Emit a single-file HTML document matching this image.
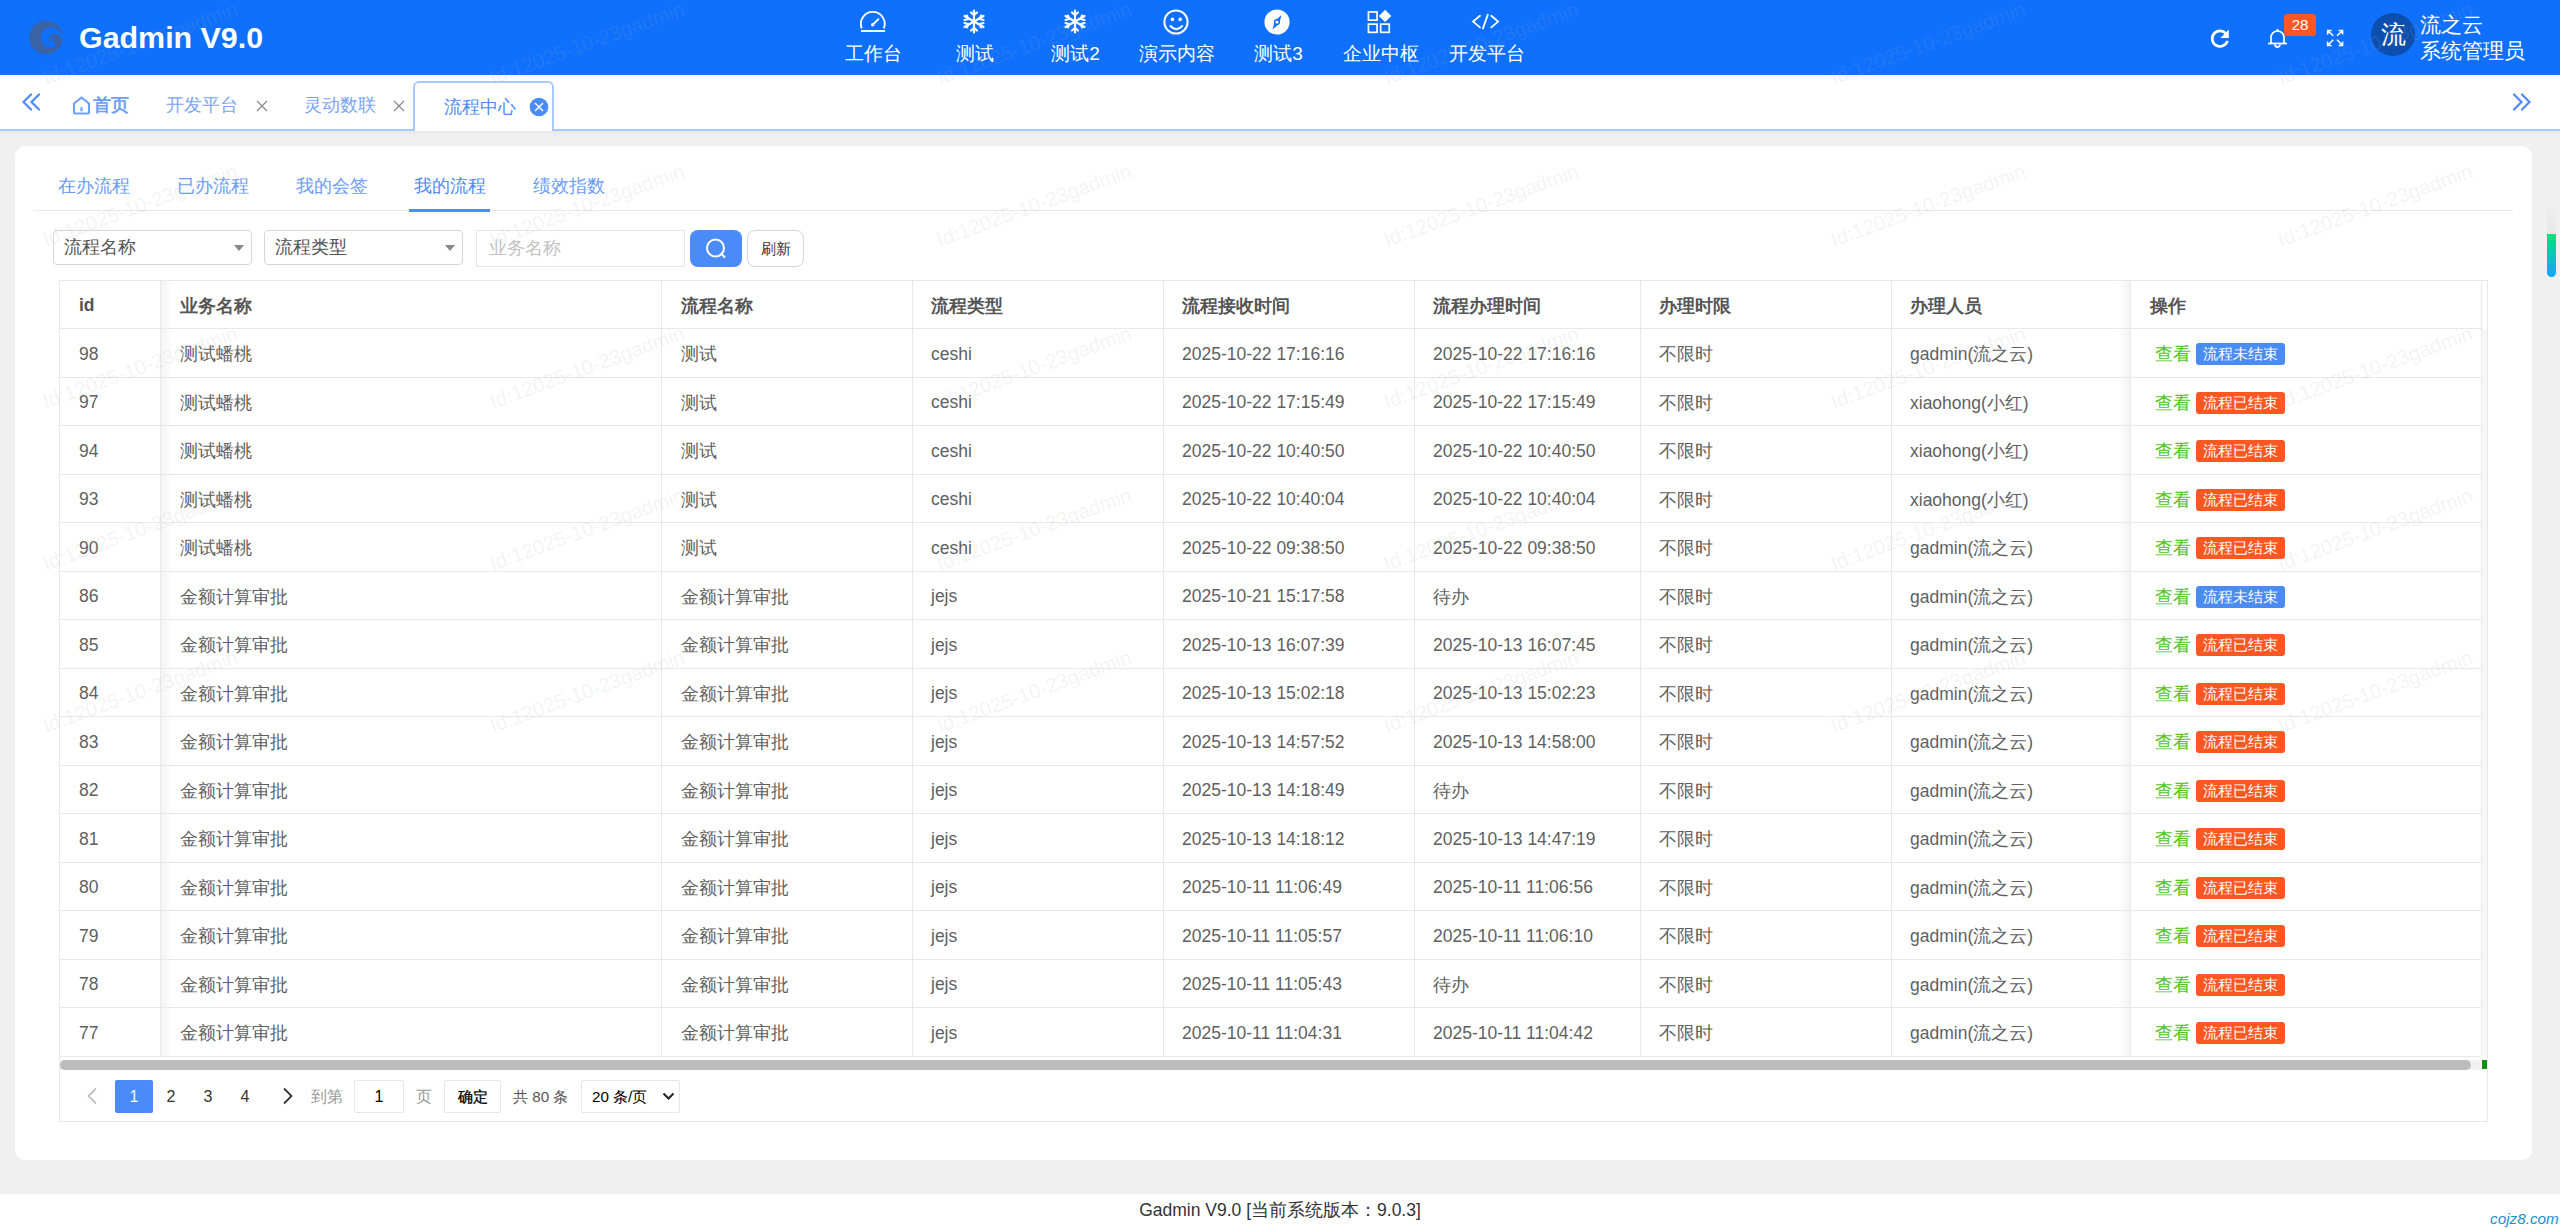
<!DOCTYPE html>
<html><head><meta charset="utf-8">
<style>
*{box-sizing:border-box;margin:0;padding:0}
html,body{width:2560px;height:1229px;overflow:hidden;background:#f0f0f0;font-family:"Liberation Sans",sans-serif;color:#5f5f5f}
.abs{position:absolute}
#hdr{position:absolute;left:0;top:0;width:2560px;height:75px;background:#0e70fd}
#logo{position:absolute}
#title{position:absolute;left:79px;top:17px;font-size:30.4px;font-weight:bold;color:#fff;line-height:40px;letter-spacing:0}
.nav{position:absolute;top:0;height:75px;color:#fff;text-align:center;font-size:19px}
.nav svg{position:absolute;top:9px;left:50%;transform:translateX(-50%)}
.nav svg.sf{margin-left:-1px}
.nav span{position:absolute;top:42.5px;left:0;right:0;line-height:22px;white-space:nowrap}
#tabbar{position:absolute;left:0;top:75px;width:2560px;height:54px;background:#fff}
#tabline{position:absolute;left:0;top:129px;width:2560px;height:2px;background:#a9c8fb;box-shadow:0 2px 3px rgba(0,0,0,0.06)}
.tab{position:absolute;top:93px;font-size:17.5px;line-height:24px;color:#5b8ff9;white-space:nowrap}
.tx{position:absolute;font-size:18px;color:#777;line-height:20px}
#acttab{position:absolute;left:413px;top:81px;width:141px;height:50px;border:2px solid #a9c8fb;border-bottom:none;border-radius:6px 6px 0 0;background:#fff}
#card{position:absolute;left:15px;top:146px;width:2517px;height:1014px;background:#fff;border-radius:10px}
.stab{position:absolute;top:173.5px;font-size:17.5px;line-height:24px;color:#6a9cf8;white-space:nowrap}
.sel{position:absolute;top:230px;height:35px;border:1px solid #d6d6d6;border-radius:4px;background:#fff;font-size:17.5px;color:#555;line-height:33px;padding-left:10px}
.sel i{position:absolute;top:14px;width:0;height:0;border-left:5px solid transparent;border-right:5px solid transparent;border-top:6px solid #888}
.hl{position:absolute;height:1px;background:#e8e8e8}
.vl{position:absolute;width:1px;background:#e8e8e8}
.th{position:absolute;display:flex;align-items:center;padding-top:3px;font-size:17.5px;font-weight:bold;color:#555;white-space:nowrap}
.td{position:absolute;display:flex;align-items:center;padding-top:3px;font-size:17.5px;color:#5f5f5f;white-space:nowrap}
.vw{color:#52c41a;margin-right:5px}
.bd{display:inline-block;height:22px;line-height:22px;padding:0 7px;font-size:15px;color:#fff;border-radius:3px}
.bl{background:#4b8bf4}
.rd{background:#ff5722}
.wm{position:absolute;font-size:20.4px;color:rgba(170,170,170,0.145);white-space:nowrap;transform-origin:0 17px;transform:rotate(-20deg);line-height:20px;pointer-events:none}
.pg{position:absolute;top:1080px;height:33px;line-height:33px;font-size:16px;color:#333;text-align:center}
#foot{position:absolute;left:0;top:1194px;width:2560px;height:35px;background:#fff;text-align:center;font-size:17.5px;color:#333;line-height:32px}
</style></head><body>

<div id="hdr">
  <svg id="logo" viewBox="0 0 46 44" style="left:24px;top:16px;width:46px;height:44px"><defs><clipPath id="hc"><circle cx="27.2" cy="21.5" r="10.3"/></clipPath></defs><circle cx="22" cy="21.4" r="16.7" fill="#3a63a6"/><circle cx="27.2" cy="21.5" r="10.3" fill="#0e70fd"/><path d="M31 20.5 L42 17 L42 24 Z" fill="#0e70fd"/><circle cx="31" cy="24.7" r="6.7" fill="#3a63a6"/><g clip-path="url(#hc)" fill="#0e70fd"><circle cx="26.4" cy="29.9" r="5.4"/></g><circle cx="28.6" cy="22.4" r="1.6" fill="#0e70fd"/></svg>
  <div id="title">Gadmin V9.0</div>

  <div class="nav" style="left:823px;width:101px">
    <svg width="28" height="25" viewBox="0 0 28 25" style="top:9px"><path d="M1.83 19.4 A11.9 11.9 0 1 1 23.77 19.4" fill="none" stroke="#fff" stroke-width="1.9"/><line x1="1" y1="22" x2="25" y2="22" stroke="#fff" stroke-width="1.9"/><path d="M12.8 15.6 L18.3 10.2" stroke="#fff" stroke-width="1.9" stroke-linecap="round"/><circle cx="12.7" cy="15.7" r="1.7" fill="#fff"/></svg>
    <span>工作台</span></div>
  <div class="nav" style="left:924px;width:101px">
    <svg class="sf" width="24" height="25" viewBox="0 0 24 25"><g stroke="#fff" stroke-width="2.2" stroke-linecap="round" fill="none"><path d="M12 1.5V23.5M2.5 7L21.5 18M2.5 18L21.5 7"/><path d="M9 3.5L12 6L15 3.5M9 21.5L12 19L15 21.5M2.5 11L6 10L5 6.5M21.5 11L18 10L19 6.5M2.5 14L6 15L5 18.5M21.5 14L18 15L19 18.5"/></g></svg>
    <span>测试</span></div>
  <div class="nav" style="left:1025px;width:101px">
    <svg class="sf" width="24" height="25" viewBox="0 0 24 25"><g stroke="#fff" stroke-width="2.2" stroke-linecap="round" fill="none"><path d="M12 1.5V23.5M2.5 7L21.5 18M2.5 18L21.5 7"/><path d="M9 3.5L12 6L15 3.5M9 21.5L12 19L15 21.5M2.5 11L6 10L5 6.5M21.5 11L18 10L19 6.5M2.5 14L6 15L5 18.5M21.5 14L18 15L19 18.5"/></g></svg>
    <span>测试2</span></div>
  <div class="nav" style="left:1126px;width:102px">
    <svg width="28" height="28" viewBox="0 0 28 28" style="top:7.6px;margin-left:-0.7px"><circle cx="14" cy="14" r="11.6" fill="none" stroke="#fff" stroke-width="2"/><circle cx="10.4" cy="11.4" r="1.8" fill="#fff"/><circle cx="18.2" cy="11.4" r="1.8" fill="#fff"/><path d="M8.5 18 Q14.3 24.6 20.1 18" fill="none" stroke="#fff" stroke-width="2" stroke-linecap="round"/></svg>
    <span>演示内容</span></div>
  <div class="nav" style="left:1228px;width:101px">
    <svg width="28" height="28" viewBox="0 0 28 28" style="top:7.6px;margin-left:-1.3px"><circle cx="14" cy="14" r="12.6" fill="#fff"/><path d="M18.5 6.9 L16.2 15.4 L9.6 21.4 L11.9 12.8 Z" fill="#0e70fd"/><circle cx="14" cy="14.1" r="3.1" fill="#0e70fd"/><circle cx="14" cy="14.1" r="1.6" fill="#fff"/></svg>
    <span>测试3</span></div>
  <div class="nav" style="left:1330px;width:101px">
    <svg width="26" height="26" viewBox="0 0 26 26" style="overflow:visible"><g fill="none" stroke="#fff" stroke-width="1.7"><rect x="0.45" y="2.95" width="8.6" height="8.2"/><rect x="0.45" y="15.15" width="8.6" height="8.2"/><rect x="12.65" y="15.15" width="8.6" height="8.2"/></g><path d="M17.1 0.7 L23.3 6.9 L17.1 13.1 L10.9 6.9 Z" fill="#fff"/></svg>
    <span>企业中枢</span></div>
  <div class="nav" style="left:1436px;width:101px">
    <svg width="26" height="18" viewBox="0 0 26 18" style="top:13px;overflow:visible"><g fill="none" stroke="#fff" stroke-width="1.8" stroke-linecap="round" stroke-linejoin="miter"><path d="M6 2.8L-0.9 8.6L6 14.4M17.3 2.8L24.1 8.6L17.3 14.4M13.8 1.6L8.9 15.5"/></g></svg>
    <span>开发平台</span></div>

  <svg class="abs" style="left:2205px;top:24px" width="30" height="30" viewBox="0 0 30 30"><path d="M22.44 16.95 A7.8 7.8 0 1 1 20.8 9.4" fill="none" stroke="#fff" stroke-width="2.7"/><path d="M23.8 5.5 L23.8 13.9 L15.4 13.9 Z" fill="#fff"/></svg>
  <svg class="abs" style="left:2267px;top:28px" width="21" height="21" viewBox="0 0 21 21"><path d="M4 15.5 V9.5 A6.5 6.5 0 0 1 17 9.5 V15.5" fill="none" stroke="#fff" stroke-width="1.7"/><line x1="1" y1="15.5" x2="20" y2="15.5" stroke="#fff" stroke-width="1.8"/><path d="M8 16.5 A2.5 2.5 0 0 0 13 16.5" fill="none" stroke="#fff" stroke-width="1.8"/><circle cx="10.5" cy="2.2" r="1.2" fill="#fff"/></svg>
  <div class="abs" style="left:2284px;top:14px;width:32px;height:22px;background:#ff5722;border-radius:3px;color:#fff;font-size:15px;line-height:22px;text-align:center">28</div>
  <svg class="abs" style="left:2326px;top:29px" width="18" height="18" viewBox="0 0 18 18"><g fill="none" stroke="#fff" stroke-width="1.5"><path d="M1.6 5.6V1.6H5.6M1.6 1.6L7.3 6.8M16.6 5.6V1.6H12.6M16.6 1.6L11 6.8M1.6 12.4V16.4H5.6M1.6 16.4L7.3 10.8M16.6 12.4V16.4H12.6M16.6 16.4L11 10.8"/></g></svg>
  <div class="abs" style="left:2371px;top:13px;width:44px;height:43px;border-radius:50%;background:#0d4faf;color:#fff;font-size:25px;line-height:43px;text-align:center">流</div>
  <div class="abs" style="left:2420px;top:12px;color:#fff;font-size:21px;line-height:26px;white-space:nowrap">流之云<br>系统管理员</div>
</div>

<div id="tabbar"></div>
<div id="tabline"></div>
<svg class="abs" style="left:22px;top:93px" width="19" height="19" viewBox="0 0 19 19"><path d="M9 1.5L1.5 9L9 16.5M17 1.5L9.5 9L17 16.5" fill="none" stroke="#4d8bf7" stroke-width="2.2" stroke-linecap="round"/></svg>
<svg class="abs" style="left:72px;top:96px" width="19" height="19" viewBox="0 0 19 19"><path d="M2 7.5L9.5 1.5L17 7.5V16.5A1 1 0 0 1 16 17.5H3A1 1 0 0 1 2 16.5Z" fill="none" stroke="#6e9ff9" stroke-width="2.2" stroke-linejoin="round"/><line x1="9.5" y1="12" x2="9.5" y2="14.5" stroke="#6e9ff9" stroke-width="2.2" stroke-linecap="round"/></svg>
<div class="tab" style="left:93px;font-weight:bold;color:#6e9ff9">首页</div>
<div class="tab" style="left:166px;color:#7aa5f8">开发平台</div>
<svg class="abs" style="left:256px;top:100px" width="12" height="12" viewBox="0 0 12 12"><path d="M1 1L11 11M11 1L1 11" stroke="#888" stroke-width="1.2"/></svg>
<div class="tab" style="left:304px;color:#7aa5f8">灵动数联</div>
<svg class="abs" style="left:393px;top:100px" width="12" height="12" viewBox="0 0 12 12"><path d="M1 1L11 11M11 1L1 11" stroke="#888" stroke-width="1.2"/></svg>
<div id="acttab"></div>
<div class="tab" style="left:444px;top:95px;color:#4d8bf7">流程中心</div>
<svg class="abs" style="left:529px;top:97px" width="20" height="20" viewBox="0 0 20 20"><circle cx="10" cy="10" r="9.3" fill="#4b8bf7"/><path d="M6 6L14 14M14 6L6 14" stroke="#fff" stroke-width="1.5"/></svg>
<svg class="abs" style="left:2512px;top:93px" width="19" height="19" viewBox="0 0 19 19"><path d="M2 1.5L9.5 9L2 16.5M10 1.5L17.5 9L10 16.5" fill="none" stroke="#4d8bf7" stroke-width="2.2" stroke-linecap="round"/></svg>

<div id="card"></div>
<div class="stab" style="left:58px">在办流程</div>
<div class="stab" style="left:177px">已办流程</div>
<div class="stab" style="left:296px">我的会签</div>
<div class="stab" style="left:414px;color:#4d8bf7">我的流程</div>
<div class="stab" style="left:533px">绩效指数</div>
<div class="hl" style="left:34px;top:210px;width:2479px"></div>
<div class="abs" style="left:409px;top:209px;width:81px;height:3px;background:#4d8bf7"></div>

<div class="sel" style="left:53px;width:199px">流程名称<i style="left:180px"></i></div>
<div class="sel" style="left:264px;width:199px">流程类型<i style="left:180px"></i></div>
<div class="abs" style="left:476px;top:230px;width:209px;height:37px;border:1px solid #e6e6e6;font-size:17.5px;color:#c2c2c2;line-height:35px;padding-left:12px">业务名称</div>
<div class="abs" style="left:690px;top:230px;width:52px;height:37px;background:#4b8bf7;border-radius:8px"></div>
<svg class="abs" style="left:704px;top:237px" width="26" height="24" viewBox="0 0 26 24"><circle cx="11.5" cy="11" r="8.5" fill="none" stroke="#fff" stroke-width="2"/><path d="M17.5 17L20.5 20" stroke="#fff" stroke-width="2" stroke-linecap="round"/></svg>
<div class="abs" style="left:747px;top:230px;width:57px;height:37px;border:1px solid #d6d6d6;border-radius:8px;font-size:15px;color:#333;line-height:35px;text-align:center">刷新</div>

<!-- fixed col shadows -->
<div class="abs" style="left:161px;top:281px;width:12px;height:776px;background:linear-gradient(to right,rgba(0,0,0,0.045),rgba(0,0,0,0))"></div>
<div class="abs" style="left:2118px;top:281px;width:12px;height:776px;background:linear-gradient(to left,rgba(0,0,0,0.045),rgba(0,0,0,0))"></div>
<div class="abs" style="left:2482px;top:329px;width:5px;height:727px;background:#f7f7f7"></div>

<div class="hl" style="top:280px;left:59px;width:2429px"></div>
<div class="hl" style="top:328px;left:59px;width:2422px"></div>
<div class="hl" style="top:377px;left:59px;width:2422px"></div>
<div class="hl" style="top:425px;left:59px;width:2422px"></div>
<div class="hl" style="top:474px;left:59px;width:2422px"></div>
<div class="hl" style="top:522px;left:59px;width:2422px"></div>
<div class="hl" style="top:571px;left:59px;width:2422px"></div>
<div class="hl" style="top:619px;left:59px;width:2422px"></div>
<div class="hl" style="top:668px;left:59px;width:2422px"></div>
<div class="hl" style="top:716px;left:59px;width:2422px"></div>
<div class="hl" style="top:765px;left:59px;width:2422px"></div>
<div class="hl" style="top:813px;left:59px;width:2422px"></div>
<div class="hl" style="top:862px;left:59px;width:2422px"></div>
<div class="hl" style="top:910px;left:59px;width:2422px"></div>
<div class="hl" style="top:959px;left:59px;width:2422px"></div>
<div class="hl" style="top:1007px;left:59px;width:2422px"></div>
<div class="hl" style="top:1056px;left:59px;width:2422px"></div>
<div class="vl" style="left:59px;top:280px;height:777px"></div>
<div class="vl" style="left:160px;top:280px;height:777px"></div>
<div class="vl" style="left:661px;top:280px;height:777px"></div>
<div class="vl" style="left:912px;top:280px;height:777px"></div>
<div class="vl" style="left:1163px;top:280px;height:777px"></div>
<div class="vl" style="left:1414px;top:280px;height:777px"></div>
<div class="vl" style="left:1640px;top:280px;height:777px"></div>
<div class="vl" style="left:1891px;top:280px;height:777px"></div>
<div class="vl" style="left:2130px;top:280px;height:777px"></div>
<div class="vl" style="left:2481px;top:280px;height:777px"></div>
<div class="vl" style="left:2487px;top:280px;height:842px"></div>
<div class="th" style="left:79px;top:280px;height:48px">id</div>
<div class="th" style="left:180px;top:280px;height:48px">业务名称</div>
<div class="th" style="left:681px;top:280px;height:48px">流程名称</div>
<div class="th" style="left:931px;top:280px;height:48px">流程类型</div>
<div class="th" style="left:1182px;top:280px;height:48px">流程接收时间</div>
<div class="th" style="left:1433px;top:280px;height:48px">流程办理时间</div>
<div class="th" style="left:1659px;top:280px;height:48px">办理时限</div>
<div class="th" style="left:1910px;top:280px;height:48px">办理人员</div>
<div class="th" style="left:2150px;top:280px;height:48px">操作</div>
<div class="td" style="left:79px;top:328px;height:49px">98</div>
<div class="td" style="left:180px;top:328px;height:49px">测试蟠桃</div>
<div class="td" style="left:681px;top:328px;height:49px">测试</div>
<div class="td" style="left:931px;top:328px;height:49px">ceshi</div>
<div class="td" style="left:1182px;top:328px;height:49px">2025-10-22 17:16:16</div>
<div class="td" style="left:1433px;top:328px;height:49px">2025-10-22 17:16:16</div>
<div class="td" style="left:1659px;top:328px;height:49px">不限时</div>
<div class="td" style="left:1910px;top:328px;height:49px">gadmin(流之云)</div>
<div class="td op" style="left:2155px;top:328px;height:49px"><span class="vw">查看</span><span class="bd bl">流程未结束</span></div>
<div class="td" style="left:79px;top:377px;height:48px">97</div>
<div class="td" style="left:180px;top:377px;height:48px">测试蟠桃</div>
<div class="td" style="left:681px;top:377px;height:48px">测试</div>
<div class="td" style="left:931px;top:377px;height:48px">ceshi</div>
<div class="td" style="left:1182px;top:377px;height:48px">2025-10-22 17:15:49</div>
<div class="td" style="left:1433px;top:377px;height:48px">2025-10-22 17:15:49</div>
<div class="td" style="left:1659px;top:377px;height:48px">不限时</div>
<div class="td" style="left:1910px;top:377px;height:48px">xiaohong(小红)</div>
<div class="td op" style="left:2155px;top:377px;height:48px"><span class="vw">查看</span><span class="bd rd">流程已结束</span></div>
<div class="td" style="left:79px;top:425px;height:49px">94</div>
<div class="td" style="left:180px;top:425px;height:49px">测试蟠桃</div>
<div class="td" style="left:681px;top:425px;height:49px">测试</div>
<div class="td" style="left:931px;top:425px;height:49px">ceshi</div>
<div class="td" style="left:1182px;top:425px;height:49px">2025-10-22 10:40:50</div>
<div class="td" style="left:1433px;top:425px;height:49px">2025-10-22 10:40:50</div>
<div class="td" style="left:1659px;top:425px;height:49px">不限时</div>
<div class="td" style="left:1910px;top:425px;height:49px">xiaohong(小红)</div>
<div class="td op" style="left:2155px;top:425px;height:49px"><span class="vw">查看</span><span class="bd rd">流程已结束</span></div>
<div class="td" style="left:79px;top:474px;height:48px">93</div>
<div class="td" style="left:180px;top:474px;height:48px">测试蟠桃</div>
<div class="td" style="left:681px;top:474px;height:48px">测试</div>
<div class="td" style="left:931px;top:474px;height:48px">ceshi</div>
<div class="td" style="left:1182px;top:474px;height:48px">2025-10-22 10:40:04</div>
<div class="td" style="left:1433px;top:474px;height:48px">2025-10-22 10:40:04</div>
<div class="td" style="left:1659px;top:474px;height:48px">不限时</div>
<div class="td" style="left:1910px;top:474px;height:48px">xiaohong(小红)</div>
<div class="td op" style="left:2155px;top:474px;height:48px"><span class="vw">查看</span><span class="bd rd">流程已结束</span></div>
<div class="td" style="left:79px;top:522px;height:49px">90</div>
<div class="td" style="left:180px;top:522px;height:49px">测试蟠桃</div>
<div class="td" style="left:681px;top:522px;height:49px">测试</div>
<div class="td" style="left:931px;top:522px;height:49px">ceshi</div>
<div class="td" style="left:1182px;top:522px;height:49px">2025-10-22 09:38:50</div>
<div class="td" style="left:1433px;top:522px;height:49px">2025-10-22 09:38:50</div>
<div class="td" style="left:1659px;top:522px;height:49px">不限时</div>
<div class="td" style="left:1910px;top:522px;height:49px">gadmin(流之云)</div>
<div class="td op" style="left:2155px;top:522px;height:49px"><span class="vw">查看</span><span class="bd rd">流程已结束</span></div>
<div class="td" style="left:79px;top:571px;height:48px">86</div>
<div class="td" style="left:180px;top:571px;height:48px">金额计算审批</div>
<div class="td" style="left:681px;top:571px;height:48px">金额计算审批</div>
<div class="td" style="left:931px;top:571px;height:48px">jejs</div>
<div class="td" style="left:1182px;top:571px;height:48px">2025-10-21 15:17:58</div>
<div class="td" style="left:1433px;top:571px;height:48px">待办</div>
<div class="td" style="left:1659px;top:571px;height:48px">不限时</div>
<div class="td" style="left:1910px;top:571px;height:48px">gadmin(流之云)</div>
<div class="td op" style="left:2155px;top:571px;height:48px"><span class="vw">查看</span><span class="bd bl">流程未结束</span></div>
<div class="td" style="left:79px;top:619px;height:49px">85</div>
<div class="td" style="left:180px;top:619px;height:49px">金额计算审批</div>
<div class="td" style="left:681px;top:619px;height:49px">金额计算审批</div>
<div class="td" style="left:931px;top:619px;height:49px">jejs</div>
<div class="td" style="left:1182px;top:619px;height:49px">2025-10-13 16:07:39</div>
<div class="td" style="left:1433px;top:619px;height:49px">2025-10-13 16:07:45</div>
<div class="td" style="left:1659px;top:619px;height:49px">不限时</div>
<div class="td" style="left:1910px;top:619px;height:49px">gadmin(流之云)</div>
<div class="td op" style="left:2155px;top:619px;height:49px"><span class="vw">查看</span><span class="bd rd">流程已结束</span></div>
<div class="td" style="left:79px;top:668px;height:48px">84</div>
<div class="td" style="left:180px;top:668px;height:48px">金额计算审批</div>
<div class="td" style="left:681px;top:668px;height:48px">金额计算审批</div>
<div class="td" style="left:931px;top:668px;height:48px">jejs</div>
<div class="td" style="left:1182px;top:668px;height:48px">2025-10-13 15:02:18</div>
<div class="td" style="left:1433px;top:668px;height:48px">2025-10-13 15:02:23</div>
<div class="td" style="left:1659px;top:668px;height:48px">不限时</div>
<div class="td" style="left:1910px;top:668px;height:48px">gadmin(流之云)</div>
<div class="td op" style="left:2155px;top:668px;height:48px"><span class="vw">查看</span><span class="bd rd">流程已结束</span></div>
<div class="td" style="left:79px;top:716px;height:49px">83</div>
<div class="td" style="left:180px;top:716px;height:49px">金额计算审批</div>
<div class="td" style="left:681px;top:716px;height:49px">金额计算审批</div>
<div class="td" style="left:931px;top:716px;height:49px">jejs</div>
<div class="td" style="left:1182px;top:716px;height:49px">2025-10-13 14:57:52</div>
<div class="td" style="left:1433px;top:716px;height:49px">2025-10-13 14:58:00</div>
<div class="td" style="left:1659px;top:716px;height:49px">不限时</div>
<div class="td" style="left:1910px;top:716px;height:49px">gadmin(流之云)</div>
<div class="td op" style="left:2155px;top:716px;height:49px"><span class="vw">查看</span><span class="bd rd">流程已结束</span></div>
<div class="td" style="left:79px;top:765px;height:48px">82</div>
<div class="td" style="left:180px;top:765px;height:48px">金额计算审批</div>
<div class="td" style="left:681px;top:765px;height:48px">金额计算审批</div>
<div class="td" style="left:931px;top:765px;height:48px">jejs</div>
<div class="td" style="left:1182px;top:765px;height:48px">2025-10-13 14:18:49</div>
<div class="td" style="left:1433px;top:765px;height:48px">待办</div>
<div class="td" style="left:1659px;top:765px;height:48px">不限时</div>
<div class="td" style="left:1910px;top:765px;height:48px">gadmin(流之云)</div>
<div class="td op" style="left:2155px;top:765px;height:48px"><span class="vw">查看</span><span class="bd rd">流程已结束</span></div>
<div class="td" style="left:79px;top:813px;height:49px">81</div>
<div class="td" style="left:180px;top:813px;height:49px">金额计算审批</div>
<div class="td" style="left:681px;top:813px;height:49px">金额计算审批</div>
<div class="td" style="left:931px;top:813px;height:49px">jejs</div>
<div class="td" style="left:1182px;top:813px;height:49px">2025-10-13 14:18:12</div>
<div class="td" style="left:1433px;top:813px;height:49px">2025-10-13 14:47:19</div>
<div class="td" style="left:1659px;top:813px;height:49px">不限时</div>
<div class="td" style="left:1910px;top:813px;height:49px">gadmin(流之云)</div>
<div class="td op" style="left:2155px;top:813px;height:49px"><span class="vw">查看</span><span class="bd rd">流程已结束</span></div>
<div class="td" style="left:79px;top:862px;height:48px">80</div>
<div class="td" style="left:180px;top:862px;height:48px">金额计算审批</div>
<div class="td" style="left:681px;top:862px;height:48px">金额计算审批</div>
<div class="td" style="left:931px;top:862px;height:48px">jejs</div>
<div class="td" style="left:1182px;top:862px;height:48px">2025-10-11 11:06:49</div>
<div class="td" style="left:1433px;top:862px;height:48px">2025-10-11 11:06:56</div>
<div class="td" style="left:1659px;top:862px;height:48px">不限时</div>
<div class="td" style="left:1910px;top:862px;height:48px">gadmin(流之云)</div>
<div class="td op" style="left:2155px;top:862px;height:48px"><span class="vw">查看</span><span class="bd rd">流程已结束</span></div>
<div class="td" style="left:79px;top:910px;height:49px">79</div>
<div class="td" style="left:180px;top:910px;height:49px">金额计算审批</div>
<div class="td" style="left:681px;top:910px;height:49px">金额计算审批</div>
<div class="td" style="left:931px;top:910px;height:49px">jejs</div>
<div class="td" style="left:1182px;top:910px;height:49px">2025-10-11 11:05:57</div>
<div class="td" style="left:1433px;top:910px;height:49px">2025-10-11 11:06:10</div>
<div class="td" style="left:1659px;top:910px;height:49px">不限时</div>
<div class="td" style="left:1910px;top:910px;height:49px">gadmin(流之云)</div>
<div class="td op" style="left:2155px;top:910px;height:49px"><span class="vw">查看</span><span class="bd rd">流程已结束</span></div>
<div class="td" style="left:79px;top:959px;height:48px">78</div>
<div class="td" style="left:180px;top:959px;height:48px">金额计算审批</div>
<div class="td" style="left:681px;top:959px;height:48px">金额计算审批</div>
<div class="td" style="left:931px;top:959px;height:48px">jejs</div>
<div class="td" style="left:1182px;top:959px;height:48px">2025-10-11 11:05:43</div>
<div class="td" style="left:1433px;top:959px;height:48px">待办</div>
<div class="td" style="left:1659px;top:959px;height:48px">不限时</div>
<div class="td" style="left:1910px;top:959px;height:48px">gadmin(流之云)</div>
<div class="td op" style="left:2155px;top:959px;height:48px"><span class="vw">查看</span><span class="bd rd">流程已结束</span></div>
<div class="td" style="left:79px;top:1007px;height:49px">77</div>
<div class="td" style="left:180px;top:1007px;height:49px">金额计算审批</div>
<div class="td" style="left:681px;top:1007px;height:49px">金额计算审批</div>
<div class="td" style="left:931px;top:1007px;height:49px">jejs</div>
<div class="td" style="left:1182px;top:1007px;height:49px">2025-10-11 11:04:31</div>
<div class="td" style="left:1433px;top:1007px;height:49px">2025-10-11 11:04:42</div>
<div class="td" style="left:1659px;top:1007px;height:49px">不限时</div>
<div class="td" style="left:1910px;top:1007px;height:49px">gadmin(流之云)</div>
<div class="td op" style="left:2155px;top:1007px;height:49px"><span class="vw">查看</span><span class="bd rd">流程已结束</span></div>

<!-- horizontal scrollbar -->
<div class="abs" style="left:60px;top:1057px;width:2427px;height:14px;background:#fff"></div>
<div class="abs" style="left:60px;top:1060px;width:2421px;height:10px;background:#f1f1f1"></div>
<div class="abs" style="left:60px;top:1060px;width:2411px;height:10px;background:#bcbcbc;border-radius:5px"></div>
<div class="abs" style="left:2482px;top:1060px;width:5px;height:9px;background:#109010"></div>
<div class="hl" style="left:59px;top:1121px;width:2429px"></div>
<div class="vl" style="left:59px;top:1056px;height:66px"></div>

<!-- pagination -->
<svg class="abs" style="left:85px;top:1087px" width="14" height="18" viewBox="0 0 14 18"><path d="M11 1.5L3.5 9L11 16.5" fill="none" stroke="#c2c2c2" stroke-width="1.8"/></svg>
<div class="pg" style="left:115px;width:38px;background:#4b8bf7;color:#fff;border-radius:2px">1</div>
<div class="pg" style="left:153px;width:36px">2</div>
<div class="pg" style="left:190px;width:36px">3</div>
<div class="pg" style="left:227px;width:36px">4</div>
<svg class="abs" style="left:281px;top:1087px" width="14" height="18" viewBox="0 0 14 18"><path d="M3 1.5L10.5 9L3 16.5" fill="none" stroke="#333" stroke-width="1.8"/></svg>
<div class="pg" style="left:311px;color:#999">到第</div>
<div class="pg" style="left:354px;width:50px;border:1px solid #e6e6e6;border-radius:2px;line-height:31px;color:#000">1</div>
<div class="pg" style="left:416px;color:#999">页</div>
<div class="pg" style="left:444px;width:57px;border:1px solid #e6e6e6;border-radius:2px;font-size:15px;line-height:31px;color:#000;-webkit-text-stroke:0.3px #000">确定</div>
<div class="pg" style="left:513px;color:#555;font-size:15.2px">共 80 条</div>
<div class="pg" style="left:581px;width:99px;border:1px solid #e6e6e6;border-radius:2px;text-align:left;padding-left:10px;line-height:31px;font-size:15.2px;color:#000">20 条/页</div>
<svg class="abs" style="left:662px;top:1090px" width="13" height="12" viewBox="0 0 13 12"><path d="M1.5 3.5L6.5 8.5L11.5 3.5" fill="none" stroke="#222" stroke-width="2"/></svg>

<!-- page vertical scrollbar -->
<div class="abs" style="left:2547px;top:205px;width:9px;height:72px;border-radius:5px;background:linear-gradient(#eeeeee,#dedede);box-shadow:0 0 2px rgba(0,0,0,0.04)"></div>
<div class="abs" style="left:2547px;top:234px;width:9px;height:43px;border-radius:0 0 5px 5px;background:linear-gradient(#00e676,#14a3ff)"></div>

<div id="foot">Gadmin V9.0 [当前系统版本：9.0.3]</div>
<div class="abs" style="left:2490px;top:1208px;font-size:15.3px;font-style:italic;color:#1e90c8;line-height:22px">cojz8.com</div>

<div class="wm" style="left:46px;top:68px">Id:12025-10-23gadmin</div>
<div class="wm" style="left:493px;top:68px">Id:12025-10-23gadmin</div>
<div class="wm" style="left:940px;top:68px">Id:12025-10-23gadmin</div>
<div class="wm" style="left:1387px;top:68px">Id:12025-10-23gadmin</div>
<div class="wm" style="left:1834px;top:68px">Id:12025-10-23gadmin</div>
<div class="wm" style="left:2281px;top:68px">Id:12025-10-23gadmin</div>
<div class="wm" style="left:46px;top:230px">Id:12025-10-23gadmin</div>
<div class="wm" style="left:493px;top:230px">Id:12025-10-23gadmin</div>
<div class="wm" style="left:940px;top:230px">Id:12025-10-23gadmin</div>
<div class="wm" style="left:1387px;top:230px">Id:12025-10-23gadmin</div>
<div class="wm" style="left:1834px;top:230px">Id:12025-10-23gadmin</div>
<div class="wm" style="left:2281px;top:230px">Id:12025-10-23gadmin</div>
<div class="wm" style="left:46px;top:392px">Id:12025-10-23gadmin</div>
<div class="wm" style="left:493px;top:392px">Id:12025-10-23gadmin</div>
<div class="wm" style="left:940px;top:392px">Id:12025-10-23gadmin</div>
<div class="wm" style="left:1387px;top:392px">Id:12025-10-23gadmin</div>
<div class="wm" style="left:1834px;top:392px">Id:12025-10-23gadmin</div>
<div class="wm" style="left:2281px;top:392px">Id:12025-10-23gadmin</div>
<div class="wm" style="left:46px;top:554px">Id:12025-10-23gadmin</div>
<div class="wm" style="left:493px;top:554px">Id:12025-10-23gadmin</div>
<div class="wm" style="left:940px;top:554px">Id:12025-10-23gadmin</div>
<div class="wm" style="left:1387px;top:554px">Id:12025-10-23gadmin</div>
<div class="wm" style="left:1834px;top:554px">Id:12025-10-23gadmin</div>
<div class="wm" style="left:2281px;top:554px">Id:12025-10-23gadmin</div>
<div class="wm" style="left:46px;top:716px">Id:12025-10-23gadmin</div>
<div class="wm" style="left:493px;top:716px">Id:12025-10-23gadmin</div>
<div class="wm" style="left:940px;top:716px">Id:12025-10-23gadmin</div>
<div class="wm" style="left:1387px;top:716px">Id:12025-10-23gadmin</div>
<div class="wm" style="left:1834px;top:716px">Id:12025-10-23gadmin</div>
<div class="wm" style="left:2281px;top:716px">Id:12025-10-23gadmin</div>
</body></html>
